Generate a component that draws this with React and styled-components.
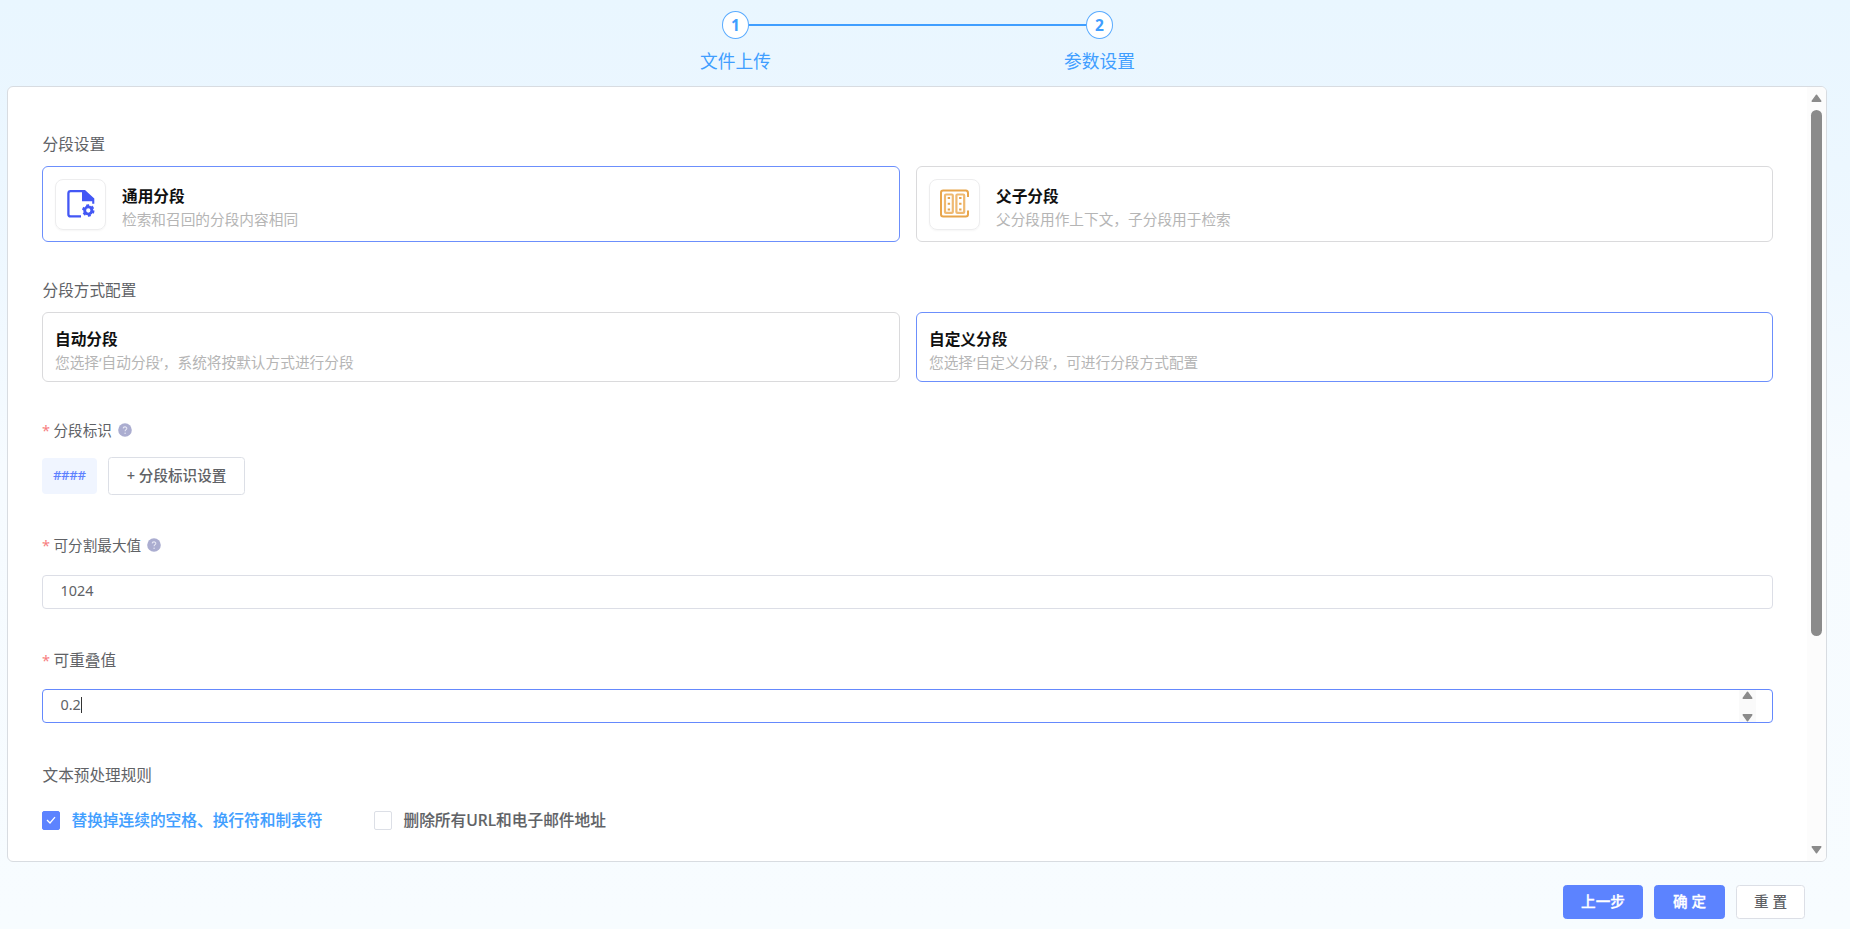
import React from "react";
import styled, { createGlobalStyle, css } from "styled-components";

const Global = createGlobalStyle`
  * { box-sizing: border-box; }
  html, body { margin: 0; height: 100%; overflow: hidden; }
  body { font-family: "Noto Sans", "Noto Sans CJK SC", sans-serif; color: #606266; }
  button, input { font-family: inherit; }
`;

const Page = styled.div`
  height: 929px;
  display: flex;
  flex-direction: column;
  background: linear-gradient(180deg, #e9f6ff 0%, #ecf7ff 18%, #eff8ff 30%, #f6fbff 50%, #f7fcff 100%);
`;

const Steps = styled.header`
  height: 86px;
  padding: 11px 0 0 700px;
  display: flex;
  flex: none;
`;
const Step = styled.div`
  width: 71px;
  display: flex;
  flex-direction: column;
  align-items: center;
  color: #409eff;
  font-size: 17.7px;
  line-height: 24px;
  white-space: nowrap;
`;
const StepDot = styled.div`
  width: 27px;
  height: 28px;
  margin-bottom: 10px;
  border: 1.5px solid #5aabff;
  border-radius: 50%;
  background: #fff;
  display: flex;
  align-items: center;
  justify-content: center;
  font-size: 15.5px;
  font-weight: 700;
`;
const StepLine = styled.div`
  width: 337px;
  height: 2px;
  margin: 13px -22px 0;
  background: #409eff;
`;

const Panel = styled.main`
  width: 1820px;
  height: 776px;
  margin-left: 7px;
  flex: none;
  display: flex;
  border: 1px solid #d8dce1;
  border-radius: 6px;
  background: #fff;
  overflow: hidden;
`;
const Form = styled.div`
  width: 1799px;
  padding: 46px 34px 0;
  flex: none;
`;
const Section = styled.section`
  height: ${(p) => p.$h}px;
`;
const Label = styled.div`
  height: 22px;
  display: flex;
  align-items: center;
  padding-left: ${(p) => (p.$required ? 0 : 0.5)}px;
  font-size: ${(p) => (p.$small ? 14.6 : 15.65)}px;
  line-height: 22px;
  margin-bottom: ${(p) => p.$gap}px;
`;
const Star = styled.span`
  width: 11.5px;
  font-size: 14.6px;
  color: #f77f7f;
`;
const Help = styled.svg`
  width: 14px;
  height: 14px;
  margin-left: 6px;
`;

const Cards = styled.div`
  display: grid;
  grid-template-columns: 858px 857px;
  gap: 16px;
`;
const Card = styled.div`
  height: ${(p) => p.$h}px;
  padding-left: 12px;
  display: flex;
  align-items: center;
  border: 1px solid ${(p) => (p.$active ? "#6c8ffc" : "#dadadc")};
  border-radius: 6px;
`;
const CardText = styled.div`
  padding-top: 6px;
`;
const IconBox = styled.div`
  width: 51px;
  height: 51px;
  margin-right: 16px;
  display: flex;
  align-items: center;
  justify-content: center;
  border: 1px solid #ededee;
  border-radius: 8px;
  box-shadow: 0 1px 2px rgba(0, 0, 0, 0.04);
`;
const CardTitle = styled.div`
  color: #101010;
  font-size: 15.7px;
  font-weight: 700;
  line-height: 24px;
`;
const CardNote = styled.div`
  color: #b5b5b5;
  font-size: 14.68px;
  line-height: 23px;
`;

const Row = styled.div`
  display: flex;
  align-items: center;
`;
const Tag = styled.span`
  width: 55px;
  height: 36px;
  margin-right: 11px;
  border-radius: 4px;
  background: #f0f5ff;
  color: #5c80ff;
  font-size: 12.6px;
  line-height: 35px;
  text-align: center;
  -webkit-text-stroke: 0.2px currentColor;
`;
const Button = styled.button`
  width: ${(p) => p.$w}px;
  height: ${(p) => p.$h || 34}px;
  padding: 0 0 4px;
  border: 1px solid #dcdfe6;
  border-radius: 3.5px;
  background: #fff;
  color: #606266;
  font-size: 14.6px;
  font-weight: 500;
  white-space: pre;
  ${(p) =>
    p.$primary &&
    css`
      border-color: #5c83ff;
      background: #5c83ff;
      color: #fff;
      -webkit-text-stroke: 0.3px currentColor;
    `}
`;

const Field = styled.div`
  height: 34px;
  padding: 0 16px 0 17.5px;
  display: flex;
  align-items: center;
  justify-content: space-between;
  border: 1px solid ${(p) => (p.$focus ? "#6589fd" : "#dcdee6")};
  border-radius: 4px;
  color: #606266;
  font-size: 14.4px;
  line-height: 30px;
`;
const Value = styled.span`
  display: flex;
  align-items: center;
  margin-top: ${(p) => (p.$focus ? -2 : -3)}px;
`;
const Caret = styled.span`
  width: 1px;
  height: 16px;
  background: #333;
`;
const Spinner = styled.div`
  width: 17px;
  height: 32px;
  padding: 1px 0 0;
  display: flex;
  flex-direction: column;
  align-items: center;
  justify-content: space-between;
  background: #fafafa;
`;
const Arrow = styled.svg`
  width: 11px;
  height: 8px;
  display: block;
  transform: ${(p) => (p.$down ? "rotate(180deg)" : "none")};
`;

const Option = styled.label`
  display: flex;
  align-items: center;
  width: ${(p) => p.$w}px;
  font-size: 15.7px;
  line-height: 22px;
  font-weight: 500;
  white-space: nowrap;
  -webkit-text-stroke: 0.12px currentColor;
  color: ${(p) => (p.$checked ? "#409eff" : "#606266")};
`;
const Box = styled.span`
  width: 18px;
  height: 19px;
  margin-right: 11.5px;
  flex: none;
  display: flex;
  align-items: center;
  justify-content: center;
  border: 1px solid ${(p) => (p.$checked ? "#5c83ff" : "#dcdfe6")};
  border-radius: 2px;
  background: ${(p) => (p.$checked ? "#5c83ff" : "#fff")};
`;

const Scrollbar = styled.div`
  width: 19px;
  padding: 7px 0 7px;
  display: flex;
  flex-direction: column;
  align-items: center;
  background: #fcfcfc;
`;
const Thumb = styled.div`
  width: 11px;
  height: 526px;
  margin: 8px 0 auto;
  border-radius: 6px;
  background: #8b8b8b;
`;

const Footer = styled.footer`
  padding: 23px 45px 0 0;
  display: flex;
  justify-content: flex-end;
  gap: 11px;
`;

const Triangle = ({ down }) => (
  <Arrow $down={down} viewBox="0 0 11 8">
    <path d="M5.5 1.2 L9.8 7.2 H1.2 Z" fill="#8b8b8b" stroke="#8b8b8b" strokeWidth="1.4" strokeLinejoin="round" />
  </Arrow>
);

const HelpIcon = () => (
  <Help viewBox="0 0 14 14" fill="none">
    <circle cx="7" cy="7" r="6.8" fill="#abadd0" />
    <path d="M5.2 5.4 C5.3 3.3 8.9 3.4 8.8 5.5 C8.7 6.7 7.1 6.8 7.1 8.3" stroke="#e8e8f4" strokeWidth="1.1" />
    <circle cx="7.1" cy="10.2" r="0.7" fill="#e8e8f4" />
  </Help>
);

const FileGearIcon = () => (
  <svg width="28" height="30" viewBox="0 0 28 30" fill="none">
    <path d="M15 2.2 H3.6 Q1.4 2.2 1.4 4.4 V25.2 Q1.4 27.4 3.6 27.4 H14" stroke="#4357f5" strokeWidth="2.3" />
    <path d="M15 1.1 H18 L27.3 9.5 V14.8 H25.2 V12.2 H15 Z" fill="#4357f5" />
    <circle cx="21.3" cy="21.5" r="3.6" stroke="#4357f5" strokeWidth="2.9" />
    <circle cx="21.3" cy="21.5" r="5.3" stroke="#4357f5" strokeWidth="1.8" strokeDasharray="2.9 2.65" />
  </svg>
);

const BlocksIcon = () => (
  <svg width="29" height="30" viewBox="0 0 29 30" fill="none" stroke="#e8a54b">
    <path d="M28 8 V4.2 Q28 1.5 25.8 1.5 H3.2 Q1 1.5 1 3.7 V25.3 Q1 27.5 3.2 27.5 H25.8 Q28 27.5 28 25.3 V21.5" strokeWidth="2" />
    <g stroke="#efb971">
      <rect x="5" y="5.5" width="7.8" height="18.4" rx="1" strokeWidth="2.2" />
      <rect x="16.4" y="5.5" width="7.8" height="18.4" rx="1" strokeWidth="2.2" />
    </g>
    <path d="M8.9 8 V22 M20.3 8 V22" strokeWidth="2.4" strokeDasharray="2 3.7" />
  </svg>
);

export default function App() {
  return (
    <Page>
      <Global />
      <Steps>
        <Step><StepDot>1</StepDot>文件上传</Step>
        <StepLine />
        <Step><StepDot>2</StepDot>参数设置</Step>
      </Steps>
      <Panel>
        <Form>
          <Section $h={146}>
            <Label $gap={11}>分段设置</Label>
            <Cards>
              <Card $h={76} $active>
                <IconBox><FileGearIcon /></IconBox>
                <CardText>
                  <CardTitle>通用分段</CardTitle>
                  <CardNote>检索和召回的分段内容相同</CardNote>
                </CardText>
              </Card>
              <Card $h={76}>
                <IconBox><BlocksIcon /></IconBox>
                <CardText>
                  <CardTitle>父子分段</CardTitle>
                  <CardNote>父分段用作上下文，子分段用于检索</CardNote>
                </CardText>
              </Card>
            </Cards>
          </Section>
          <Section $h={140}>
            <Label $gap={11}>分段方式配置</Label>
            <Cards>
              <Card $h={70}>
                <CardText>
                  <CardTitle>自动分段</CardTitle>
                  <CardNote>您选择‘自动分段’，系统将按默认方式进行分段</CardNote>
                </CardText>
              </Card>
              <Card $h={70} $active>
                <CardText>
                  <CardTitle>自定义分段</CardTitle>
                  <CardNote>您选择‘自定义分段’，可进行分段方式配置</CardNote>
                </CardText>
              </Card>
            </Cards>
          </Section>
          <Section $h={115}>
            <Label $small $required $gap={16}><Star>*</Star>分段标识<HelpIcon /></Label>
            <Row>
              <Tag>####</Tag>
              <Button $w={137} $h={38}>+ 分段标识设置</Button>
            </Row>
          </Section>
          <Section $h={115}>
            <Label $small $required $gap={19}><Star>*</Star>可分割最大值<HelpIcon /></Label>
            <Field><Value>1024</Value></Field>
          </Section>
          <Section $h={115}>
            <Label $required $gap={18}><Star>*</Star>可重叠值</Label>
            <Field $focus>
              <Value $focus>0.2<Caret /></Value>
              <Spinner><Triangle /><Triangle down /></Spinner>
            </Field>
          </Section>
          <Section $h={80}>
            <Label $gap={23}>文本预处理规则</Label>
            <Row>
              <Option $w={332} $checked>
                <Box $checked>
                  <svg width="12" height="10" viewBox="0 0 12 10" fill="none">
                    <path d="M2 5 L5 8 L10 2.2" stroke="#fff" strokeWidth="1.3" />
                  </svg>
                </Box>
                替换掉连续的空格、换行符和制表符
              </Option>
              <Option>
                <Box />
                删除所有URL和电子邮件地址
              </Option>
            </Row>
          </Section>
        </Form>
        <Scrollbar><Triangle /><Thumb /><Triangle down /></Scrollbar>
      </Panel>
      <Footer>
        <Button $primary $w={80}>上一步</Button>
        <Button $primary $w={71}>确 定</Button>
        <Button $w={69}>重 置</Button>
      </Footer>
    </Page>
  );
}
